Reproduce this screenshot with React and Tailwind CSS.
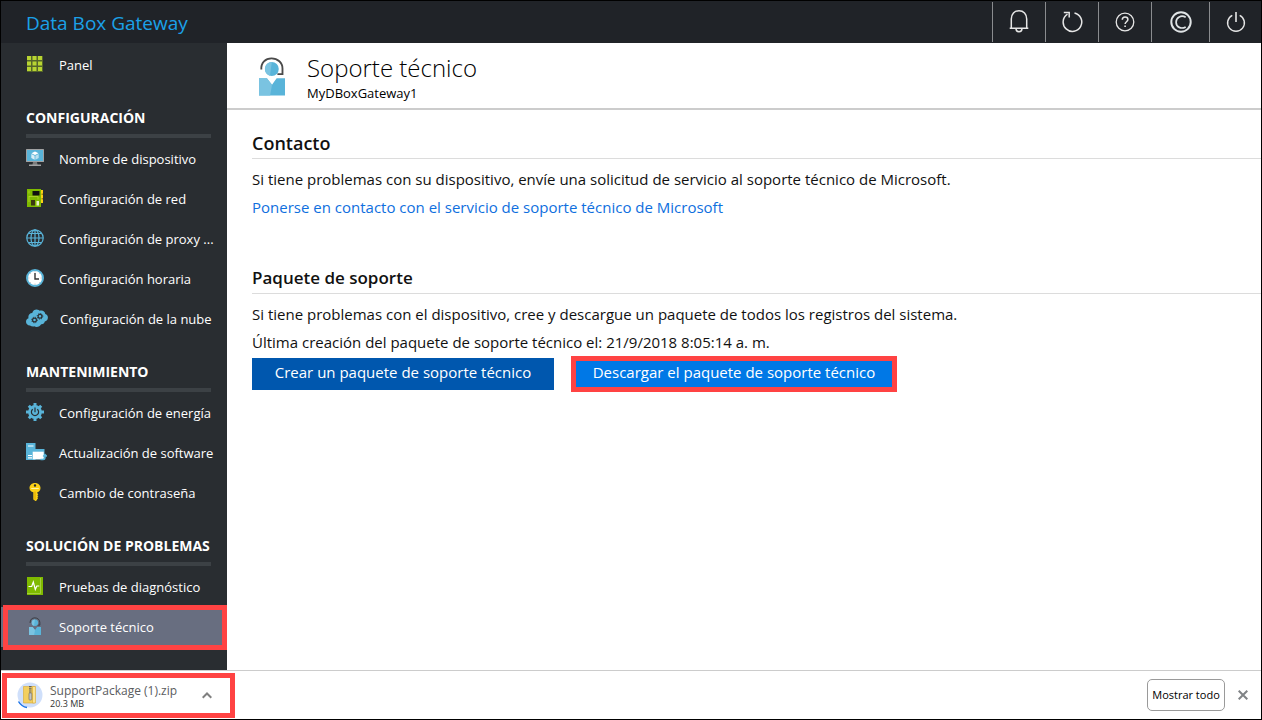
import React from "react";

function GridIcon() {
  return (
    <svg width="18" height="18" viewBox="0 0 18 18" aria-hidden="true">
      <rect x="1" y="1" width="16" height="16" fill="#55652a" />
      <g fill="#b8d432">
        <path d="M1 1h4v4H1zM6.500 1h4v4h-4zM12 1h4v4h-4zM1 6.500h4v4H1zM6.500 6.500h4v4h-4zM12 6.500h4v4h-4zM1 12h4v4H1zM6.500 12h4v4h-4zM12 12h4v4h-4z" />
      </g>
    </svg>
  );
}

function MonitorIcon() {
  return (
    <svg width="18" height="18" viewBox="0 0 18 18" aria-hidden="true">
      <rect width="18" height="13" rx="0.500" fill="#a0a1a2" />
      <rect x="1" y="1" width="16" height="11" fill="#59b4d9" />
      <path d="M7 13h4l.6 3H6.400z" fill="#7a7a7a" />
      <rect x="3" y="15.500" width="12" height="1.500" fill="#a0a1a2" />
      <path d="M9 2.500l3.500 1.700L9 6 5.500 4.200z" fill="#fff" />
      <path d="M5.300 5l3.300 1.700v4L5.300 9z" fill="#d9eef7" />
      <path d="M12.700 5L9.400 6.700v4L12.700 9z" fill="#b9dfee" />
    </svg>
  );
}

function NetworkIcon() {
  return (
    <svg width="18" height="18" viewBox="0 0 18 18" aria-hidden="true">
      <rect x="14" y="1" width="3" height="13" fill="#fcd116" />
      <path d="M15.500 4.500H17v1.500h-1.500zM15.500 9H17v1.500h-1.500z" fill="#a08a10" />
      <rect x="1" width="14" height="18" fill="#7fba00" />
      <rect x="6.500" y="2" width="7" height="4.500" fill="#101010" />
      <path d="M3 1.500v3M3 7v6M3 7.500h9v3" stroke="#b8d432" strokeWidth="0.800" fill="none" />
      <rect x="5" y="11" width="4" height="5.500" fill="#3b3a10" />
      <rect x="10.500" y="12" width="2.500" height="4.500" fill="#e8f0c8" />
    </svg>
  );
}

function GlobeIcon() {
  return (
    <svg width="18" height="18" viewBox="0 0 18 18" fill="none" stroke="#59b4d9" strokeWidth="1.200" aria-hidden="true">
      <circle cx="9" cy="9" r="8.200" />
      <ellipse cx="9" cy="9" rx="4" ry="8.200" />
      <path d="M9 .8v16.400M.8 9h16.400M2.500 4.500h13M2.500 13.500h13" />
    </svg>
  );
}

function ClockIcon() {
  return (
    <svg width="18" height="18" viewBox="0 0 18 18" aria-hidden="true">
      <circle cx="9" cy="9" r="8" fill="#fff" stroke="#59b4d9" strokeWidth="2" />
      <path d="M9 4v6h4" fill="none" stroke="#333" strokeWidth="1.400" />
      <path d="M9 2.300v1M9 14.700v1M2.300 9h1M14.700 9h1M4.300 4.300l.6.6M13.100 4.900l.6-.6M4.300 13.700l.6-.6M13.100 13.100l.6.6" stroke="#999" strokeWidth="0.800" />
    </svg>
  );
}

function CloudGearsIcon() {
  return (
    <svg width="22" height="18" viewBox="0 0 22 18" aria-hidden="true">
      <path
        d="M4 16.500C1.500 16.500 0 14.800 0 12.800c0-1.700 1-3 2.500-3.500C1.800 6.500 3.500 4 6.200 3.900 7 1.500 9.200.3 11.500.7c1 .1 1.600.5 2.200 1 2.500-1 5.300.4 5.600 3.200C21 5.300 22 6.900 21.900 8.800c-.1 2-1.400 3.400-3.100 3.800-.3 1.700-1.800 2.800-3.600 2.600-1.200 2.300-4.600 3.700-7 2-1 .4-3 .1-4.200-.7z"
        fill="#59b4d9"
      />
      <g fill="none" stroke="#2a2e32">
        <circle cx="8.500" cy="11" r="1.900" strokeWidth="1.200" />
        <circle cx="8.500" cy="11" r="2.800" strokeWidth="1" strokeDasharray="1.100 1.100" />
        <circle cx="14" cy="7.300" r="1.900" strokeWidth="1.200" />
        <circle cx="14" cy="7.300" r="2.800" strokeWidth="1" strokeDasharray="1.100 1.100" />
      </g>
    </svg>
  );
}

function PowerGearIcon() {
  return (
    <svg width="18" height="18" viewBox="0 0 18 18" aria-hidden="true">
      <g stroke="#59b4d9" strokeWidth="3">
        <path d="M9 0v18M0 9h18M2.800 2.800l12.400 12.400M15.200 2.800L2.800 15.200" />
      </g>
      <circle cx="9" cy="9" r="6.900" fill="#59b4d9" />
      <path d="M6.700 6.200a3.600 3.600 0 1 0 4.600 0" fill="none" stroke="#2a2e32" strokeWidth="1.200" />
      <path d="M9 4.500v4.700" stroke="#2a2e32" strokeWidth="1.200" />
    </svg>
  );
}

function SoftwareIcon() {
  return (
    <svg width="21" height="18" viewBox="0 0 21 18" aria-hidden="true">
      <rect x="0" y="0" width="9.500" height="17" fill="#59b4d9" />
      <path d="M2 3h5.500M2 12.500h4M2 14.800h4" stroke="#fff" strokeWidth="1.200" />
      <rect x="6" y="6" width="12.500" height="10.500" fill="#59b4d9" />
      <rect x="6.700" y="8.700" width="11" height="7.600" fill="#fff" />
      <path d="M14.500 16.500h2.500c1.500 0 2-1 2-2.500V12M17.200 13.500L19 11.500l1.800 2" stroke="#59b4d9" strokeWidth="1.500" fill="none" />
    </svg>
  );
}

function KeyIcon() {
  return (
    <svg width="18" height="18" viewBox="0 0 18 18" aria-hidden="true">
      <path
        fillRule="evenodd"
        d="M9 0c3.200 0 5.500 2.300 5.500 4.900 0 2.100-1.300 3.700-3.200 4.400v1l1 .9-1 1 1 1-1 1 .8.9-2 2.900H9.500L7.300 16.500V9.300C5 8.600 3.500 7 3.500 4.900 3.500 2.300 5.800 0 9 0zm0 1.300a1.200 1.200 0 1 0 0 2.400 1.200 1.200 0 0 0 0-2.400z"
        fill="#fcd116"
      />
      <path d="M5.200 5h7.600v1H5.200z" fill="#fff3a6" />
      <path d="M8.500 8.500h1v8h-1z" fill="#d9a400" />
    </svg>
  );
}

function PulseIcon() {
  return (
    <svg width="18" height="18" viewBox="0 0 18 18" aria-hidden="true">
      <rect x="1" width="16" height="18" fill="#7fba00" />
      <path d="M14.500 1v15.500H1" stroke="#a5d03c" fill="none" strokeWidth="1" />
      <path d="M2.500 9.500h3.200L7.300 5l2 7.500 1.500-3.500h2.500" fill="none" stroke="#fff" strokeWidth="1.200" />
    </svg>
  );
}

function SupportIcon({ className, band = "#4a4a4a" }) {
  return (
    <svg viewBox="0 0 28 42" className={className} aria-hidden="true">
      <path d="M2.500 14C2 6.500 7 2 13.500 2S25.500 6.500 25.300 13v6h-5.500" fill="none" stroke={band} strokeWidth="2" />
      <circle cx="13.800" cy="13.500" r="7.500" fill="#59b4d9" />
      <path d="M13.800 6a7.500 7.500 0 0 0-2 14.700z" fill="#7ac3e1" />
      <path d="M0 23.500h8.500l5.500 7 5-7h9V42H0z" fill="#59b4d9" />
      <path d="M0 23.500h8.500L14 30.500 12 42H0z" fill="#7ac3e1" />
    </svg>
  );
}

function BellIcon() {
  return (
    <svg width="20" height="24" viewBox="0 0 20 24" fill="none" stroke="#e6e6e6" strokeWidth="1.500" aria-hidden="true">
      <path d="M.7 18.200h18.600M2.300 18V9C2.300 4 5.500.8 10 .8S17.700 4 17.700 9v9M7 18.500c0 2 1.200 3.200 3 3.200s3-1.200 3-3.200" />
    </svg>
  );
}

function RefreshIcon() {
  return (
    <svg width="22" height="22" viewBox="0 0 22 22" fill="none" stroke="#e6e6e6" strokeWidth="1.500" aria-hidden="true">
      <path d="M13.500 2a9.300 9.300 0 1 1-7 1.200M2.800 1.600h5.400v5" />
    </svg>
  );
}

function HelpIcon() {
  return (
    <svg width="20" height="20" viewBox="0 0 20 20" fill="none" stroke="#e6e6e6" strokeWidth="1.300" aria-hidden="true">
      <circle cx="10" cy="10" r="8.800" />
      <path d="M7.300 7.800c0-1.800 1.200-2.900 2.800-2.900s2.800 1 2.800 2.500c0 2.300-2.800 2.400-2.800 4.700" strokeWidth="1.500" />
      <path d="M10.100 13.400V15" strokeWidth="1.600" />
    </svg>
  );
}

function CopyrightIcon() {
  return (
    <svg width="22" height="22" viewBox="0 0 22 22" fill="none" stroke="#e0e4e6" strokeWidth="2" aria-hidden="true">
      <circle cx="11" cy="11" r="9.700" />
      <path d="M15.700 6.200c-4.500-2.500-9.600 0-9.600 5s5.100 7.200 9.600 4.700" strokeWidth="1.700" />
    </svg>
  );
}

function PowerIcon() {
  return (
    <svg width="20" height="20" viewBox="0 0 20 20" fill="none" stroke="#e6e6e6" strokeWidth="1.400" aria-hidden="true">
      <path d="M6.300 3.300a8.400 8.400 0 1 0 7.400 0" />
      <path d="M10 0v10" strokeWidth="1.600" />
    </svg>
  );
}

function ZipIcon() {
  return (
    <svg width="26" height="27" viewBox="0 0 26 27" aria-hidden="true">
      <circle cx="13" cy="13" r="12.500" fill="#cfdffa" />
      <path d="M1.500 19.500c2 3.500 5 5.500 8.500 6" fill="none" stroke="#1a73e8" strokeWidth="1.500" />
      <path d="M6.500 4.500h11V21h-11z" fill="#f3cf5f" stroke="#d9a92f" strokeWidth="0.600" />
      <path d="M15.500 4.500h3V21h-3z" fill="#fbe395" stroke="#d9a92f" strokeWidth="0.600" />
      <path d="M13.300 4v7" stroke="#606060" strokeWidth="2.600" strokeDasharray="1.200 1" />
      <rect x="12" y="11" width="2.800" height="7" rx="0.800" fill="#c4c4c4" stroke="#666" strokeWidth="0.600" />
    </svg>
  );
}

const sections = [
  {
    title: "CONFIGURACIÓN",
    items: [
      { label: "Nombre de dispositivo", icon: <MonitorIcon /> },
      { label: "Configuración de red", icon: <NetworkIcon /> },
      { label: "Configuración de proxy ...", icon: <GlobeIcon /> },
      { label: "Configuración horaria", icon: <ClockIcon /> },
      { label: "Configuración de la nube", icon: <CloudGearsIcon /> },
    ],
  },
  {
    title: "MANTENIMIENTO",
    items: [
      { label: "Configuración de energía", icon: <PowerGearIcon /> },
      { label: "Actualización de software", icon: <SoftwareIcon /> },
      { label: "Cambio de contraseña", icon: <KeyIcon /> },
    ],
  },
  {
    title: "SOLUCIÓN DE PROBLEMAS",
    items: [
      { label: "Pruebas de diagnóstico", icon: <PulseIcon /> },
      { label: "Soporte técnico", icon: <SupportIcon className="h-[18px] w-[18px]" band="#33373b" />, active: true },
    ],
  },
];

function NavItem({ label, icon, active }) {
  return (
    <a
      href="#"
      aria-current={active ? "page" : undefined}
      className={`relative flex h-10 items-center pl-[25px] text-[13px] font-medium whitespace-nowrap text-white ${active ? "bg-[#686e80]" : ""}`}
    >
      <span className="mr-3 flex min-w-[21px] items-center pb-0.5">{icon}</span>
      <span className="pt-px">{label}</span>
      {active && (
        <span className="pointer-events-none absolute -top-0.5 right-0 -bottom-[3px] left-0.5 border-[5px] border-[#ff4343]" />
      )}
    </a>
  );
}

const tools = [
  { label: "Notificaciones", icon: <BellIcon />, width: "w-[53px]" },
  { label: "Actualizar", icon: <RefreshIcon />, width: "w-[53px]" },
  { label: "Ayuda", icon: <HelpIcon />, width: "w-[53px]" },
  { label: "Copyright", icon: <CopyrightIcon />, width: "w-[58px]" },
  { label: "Energía", icon: <PowerIcon />, width: "w-[52px]" },
];

export default function App() {
  return (
    <div className="flex min-h-screen flex-col border border-black bg-white font-['Open_Sans','Noto_Sans',sans-serif] text-black">
      <header className="flex h-[42px] shrink-0 items-stretch justify-between bg-[#202328]">
        <span className="pt-px pl-[25px] text-[19px] leading-[42px] text-[#1ba1e8]">Data Box Gateway</span>
        <div className="flex py-px">
          {tools.map((t) => (
            <button key={t.label} type="button" aria-label={t.label} className={`flex items-center justify-center border-l border-[#8a8c8f] ${t.width}`}>
              {t.icon}
            </button>
          ))}
        </div>
      </header>

      <div className="flex flex-1">
        <nav className="w-[226px] shrink-0 bg-[#292d31] pt-0.5 pb-[22px]">
          <NavItem label="Panel" icon={<GridIcon />} />
          {sections.map((s) => (
            <section key={s.title} className="pt-5">
              <h2 className="ml-[25px] text-[14px] leading-[26px] font-bold whitespace-nowrap text-white">{s.title}</h2>
              <div className="mt-[3px] mr-4 mb-px ml-[25px] h-1 bg-[#3c4145]" />
              {s.items.map((i) => (
                <NavItem key={i.label} {...i} />
              ))}
            </section>
          ))}
        </nav>

        <main className="min-w-0 flex-1">
          <div className="flex h-[67px] items-center border-b-2 border-[#cccccc] pl-8">
            <SupportIcon className="h-10 w-[26px]" />
            <div className="ml-[22px] pt-0.5">
              <h1 className="text-[24px] leading-8 font-light">Soporte técnico</h1>
              <p className="text-[13px] leading-[18px]">MyDBoxGateway1</p>
            </div>
          </div>

          <div className="pl-[25px] text-[15px] text-[#111]">
            <section className="pt-5">
              <h2 className="border-b border-[#dcdcdc] pt-px pb-[3px] text-[18px] leading-6 font-semibold">Contacto</h2>
              <p className="mt-1.5 leading-7">Si tiene problemas con su dispositivo, envíe una solicitud de servicio al soporte técnico de Microsoft.</p>
              <a href="#" className="block leading-7 text-[#0f6fde]">Ponerse en contacto con el servicio de soporte técnico de Microsoft</a>
            </section>

            <section className="pt-[45px]">
              <h2 className="border-b border-[#dcdcdc] pb-[3px] text-[17px] leading-6 font-semibold">Paquete de soporte</h2>
              <p className="mt-1.5 leading-7">Si tiene problemas con el dispositivo, cree y descargue un paquete de todos los registros del sistema.</p>
              <p className="leading-7">Última creación del paquete de soporte técnico el: 21/9/2018 8:05:14 a. m.</p>
              <div className="flex items-center gap-[17px]">
                <button type="button" className="h-8 w-[302px] bg-[#0057ae] pb-1 font-medium text-white">Crear un paquete de soporte técnico</button>
                <button type="button" className="h-9 w-[326px] border-[5px] border-[#ff4343] bg-[#0078e6] pb-1 font-medium text-white">Descargar el paquete de soporte técnico</button>
              </div>
            </section>
          </div>
        </main>
      </div>

      <footer className="flex h-[49px] shrink-0 items-center justify-between border-t border-[#cccccc] pr-3 pl-px">
        <button type="button" className="flex h-[45px] w-[233px] items-center border-[5px] border-[#ff4343] pl-2.5 text-left">
          <ZipIcon />
          <span className="ml-[7px] w-[132px] pt-[3px]">
            <span className="block text-[12px] leading-[15px] whitespace-nowrap text-[#5a5c60]">SupportPackage (1).zip</span>
            <span className="block text-[9px] leading-3 text-[#333]">20.3 MB</span>
          </span>
          <svg width="10" height="7" viewBox="0 0 10 7" className="ml-5" fill="none" stroke="#808080" strokeWidth="2" aria-hidden="true">
            <path d="M.7 5.800L5 1.500l4.300 4.300" />
          </svg>
        </button>
        <div className="flex items-center gap-3">
          <button type="button" className="h-8 w-[78px] rounded-[5px] border border-[#9a9a9a] text-[11px] whitespace-nowrap">Mostrar todo</button>
          <button type="button" aria-label="Cerrar" className="p-px">
            <svg width="10" height="10" viewBox="0 0 10 10" stroke="#808386" strokeWidth="2" aria-hidden="true">
              <path d="M.7.7l8.600 8.600M9.300.7L.7 9.300" />
            </svg>
          </button>
        </div>
      </footer>
    </div>
  );
}
